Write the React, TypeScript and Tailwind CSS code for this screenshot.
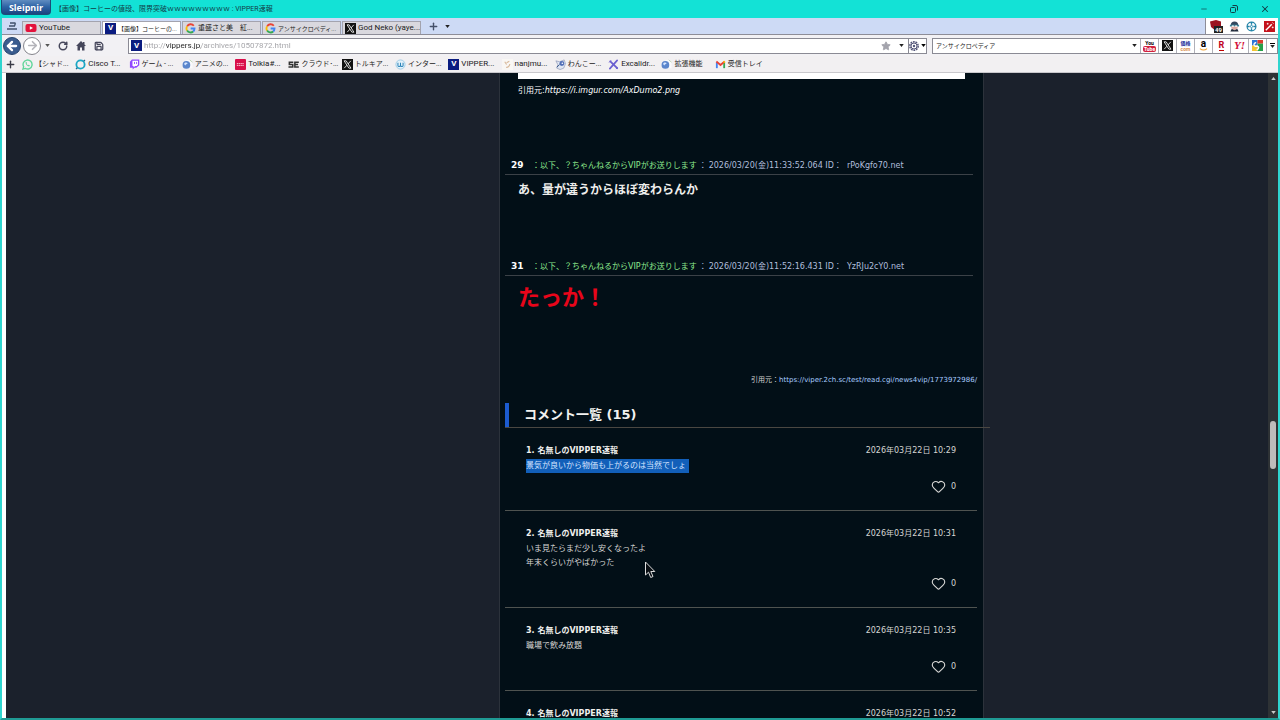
import type { ReactNode } from "react"
import { ArrowLeft, ArrowRight, Heart, Minus, Plus, RotateCw, Save, Star, X } from "lucide-react"

const uiFont = "font-['Roboto','Noto_Sans_CJK_JP',sans-serif]"
const pageFont = "font-['DejaVu_Sans','Noto_Sans_CJK_JP',sans-serif]"

function YouTubeIcon() {
  return (
    <svg viewBox="0 0 12 12" className="size-3 shrink-0">
      <rect x="0.5" y="2" width="11" height="8" rx="2" fill="#e3123c" />
      <path d="M4.8 4.2v3.6L8 6z" fill="#fff" />
    </svg>
  )
}

function VIcon() {
  return (
    <span className="flex size-[11px] shrink-0 items-center justify-center bg-[#0b1c80] text-[8px] font-bold leading-none text-white">
      V
    </span>
  )
}

function GoogleIcon() {
  return (
    <svg viewBox="0 0 12 12" className="size-[11px] shrink-0" fill="none" strokeWidth="2">
      <path d="M9.6 3A4.4 4.4 0 0 0 2.3 3.7" stroke="#ea4335" />
      <path d="M2.3 3.7a4.4 4.4 0 0 0 0 4.6" stroke="#fbbc05" />
      <path d="M2.3 8.3A4.4 4.4 0 0 0 8.9 9.3" stroke="#34a853" />
      <path d="M8.9 9.3A4.4 4.4 0 0 0 10.4 6H6.2" stroke="#4285f4" />
    </svg>
  )
}

function XIcon() {
  return (
    <svg viewBox="0 0 12 12" className="size-[11px] shrink-0">
      <rect width="12" height="12" fill="#111" />
      <path d="M2.3 2h2.2l5.3 8H7.5z" fill="none" stroke="#fff" strokeWidth="0.9" />
      <path d="M9.6 2 6.6 5.4M5.4 6.8 2.4 10" stroke="#fff" strokeWidth="0.9" />
    </svg>
  )
}

function WhatsAppIcon() {
  return (
    <svg viewBox="0 0 12 12" className="size-[11px] shrink-0" fill="none">
      <path d="M1 11l.8-2.6A4.9 4.9 0 1 1 3.7 10.3z" stroke="#5fd59a" strokeWidth="1.5" />
      <path d="M4 3.6c-.6 2 2.2 4.9 4.2 4.4l.3-1.2-1.3-.6-.6.6c-.8-.3-1.3-.9-1.6-1.6l.5-.5-.5-1.3z" fill="#5fd59a" />
    </svg>
  )
}

function RingIcon() {
  return (
    <svg viewBox="0 0 12 12" className="size-[11px] shrink-0" fill="none">
      <circle cx="6" cy="6" r="4.5" stroke="#1aa7c4" strokeWidth="2" />
      <path d="M2.5 9.5 1.2 11M9.5 2.5l1.3-1.3" stroke="#1d6c94" strokeWidth="1.5" />
    </svg>
  )
}

function TwitchIcon() {
  return (
    <svg viewBox="0 0 12 12" className="size-[11px] shrink-0">
      <path d="M3.2.5h8v6.2L8 9.5H6L4 11.5v-2H1V3z" fill="#9147ff" />
      <path d="M3.8 1.8h6v4.2L8.5 7.5H6.8L5 9V7.5H3.8z" fill="#fff" />
      <path d="M6 3.2v2.3M8.3 3.2v2.3" stroke="#9147ff" strokeWidth="1" />
    </svg>
  )
}

function GlobeIcon() {
  return (
    <svg viewBox="0 0 12 12" className="size-[11px] shrink-0">
      <path d="M5 1h5l1.5 2v7H5z" fill="#fafafc" />
      <path d="M8.5 1 11.5 3.5" stroke="#b9d2b0" />
      <circle cx="4.8" cy="6.5" r="4.2" fill="#5b86cc" />
      <path d="M2.2 5.5c1-2 3-2 4-.8-1 1.4-2 .8-2.5 2.3z" fill="#d4e5ff" />
    </svg>
  )
}

function TolkiaIcon() {
  return (
    <svg viewBox="0 0 12 12" className="size-[11px] shrink-0">
      <rect width="12" height="12" rx="1" fill="#d90f4b" />
      <path d="M2 5h8M2 7h8" stroke="#ffd2de" strokeWidth="1" strokeDasharray="1.5 .5" />
    </svg>
  )
}

function ScIcon() {
  return (
    <svg viewBox="0 0 12 12" className="size-[11px] shrink-0" fill="none" stroke="#333" strokeWidth="1.7">
      <path d="M5.8 3.5H1.5v2.6h3.7v2.6H.5" />
      <path d="M11.8 3.5H7.5v5.2h4.3M7.5 6.1h3.5" />
    </svg>
  )
}

function WikiwikiIcon() {
  return (
    <svg viewBox="0 0 12 12" className="size-[11px] shrink-0" fill="none">
      <circle cx="6" cy="6" r="5" fill="#e2f1fa" stroke="#9dcbe6" />
      <path d="M3.2 4v3c0 1.6 2.6 1.6 2.8 0V4v3c.2 1.6 2.8 1.6 2.8 0V4" stroke="#2b83b8" strokeWidth="1.1" />
    </svg>
  )
}

function NanIcon() {
  return (
    <svg viewBox="0 0 12 12" className="size-[11px] shrink-0" fill="none">
      <rect width="12" height="12" fill="#f9f7f4" />
      <path d="M3 3l2 3M5 4l3-1.5M4.5 9c2 .5 4-1.5 4-3.5" stroke="#d8b99b" strokeWidth="1.2" />
    </svg>
  )
}

function DogIcon() {
  return (
    <svg viewBox="0 0 12 12" className="size-[11px] shrink-0" fill="none">
      <path d="M1 2l4 1 5-2 1.5 4-2 5-4 1.5L2 10l1-4z" fill="#dfe5f2" stroke="#7785a8" strokeWidth="0.6" />
      <circle cx="7.5" cy="5" r="2.7" fill="#5270b8" />
      <path d="M2 9l3-3" stroke="#24477f" />
      <circle cx="8" cy="4.6" r=".9" fill="#fff" />
    </svg>
  )
}

function ExcalidrawIcon() {
  return (
    <svg viewBox="0 0 12 12" className="size-[11px] shrink-0" fill="none" stroke="#6a5fd0" strokeLinecap="round">
      <path d="M2.5 2.5l7.5 7.5" strokeWidth="2" />
      <path d="M10 1.5 2 10.5" strokeWidth="1.8" />
      <path d="M1.5 3.5 3 2M9 10.5l1.5-1" strokeWidth="1" />
    </svg>
  )
}

function GmailIcon() {
  return (
    <svg viewBox="0 0 12 12" className="size-[11px] shrink-0" fill="none" strokeWidth="2">
      <path d="M2 10V3.5" stroke="#4285f4" />
      <path d="M10 10V3.5" stroke="#34a853" />
      <path d="M1.5 2.8 6 6.5l4.5-3.7" stroke="#ea4335" />
      <path d="M9.3 3.8l1.4-1.2" stroke="#fbbc05" />
    </svg>
  )
}

function Caret({ className = "" }: { className?: string }) {
  return (
    <svg viewBox="0 0 6 4" className={`h-[3px] w-[5px] shrink-0 ${className}`}>
      <path d="M0 0h6L3 4z" fill="currentColor" />
    </svg>
  )
}

const tabs = [
  { icon: <YouTubeIcon />, title: "YouTube", size: "text-[8px]" },
  { icon: <VIcon />, title: "【画像】コーヒーの...", size: "text-[6px]", active: true },
  { icon: <GoogleIcon />, title: "重盛さと美　紅...", size: "text-[7px]" },
  { icon: <GoogleIcon />, title: "アンサイクロペディ...", size: "text-[6px]" },
  { icon: <XIcon />, title: "God Neko (yaye...", size: "text-[8px]" },
]

const bookmarks = [
  { icon: <WhatsAppIcon />, title: "【シャド..." },
  { icon: <RingIcon />, title: "Cisco T..." },
  { icon: <TwitchIcon />, title: "ゲーム - ..." },
  { icon: <GlobeIcon />, title: "アニメの..." },
  { icon: <TolkiaIcon />, title: "Tolkia#..." },
  { icon: <ScIcon />, title: "クラウド･..." },
  { icon: <XIcon />, title: "トルキア..." },
  { icon: <WikiwikiIcon />, title: "インター..." },
  { icon: <VIcon />, title: "VIPPER..." },
  { icon: <NanIcon />, title: "nanjmu..." },
  { icon: <DogIcon />, title: "わんこー..." },
  { icon: <ExcalidrawIcon />, title: "Excalidr..." },
  { icon: <GlobeIcon />, title: "拡張機能" },
  { icon: <GmailIcon />, title: "受信トレイ" },
]

const searchEngines: { name: string; icon: ReactNode }[] = [
  {
    name: "YouTube",
    icon: (
      <span className="flex flex-col items-center text-[5px] font-bold leading-[6px] text-black">
        You
        <span className="rounded-xs bg-[#d2203c] px-px text-white">Tube</span>
      </span>
    ),
  },
  { name: "X", icon: <XIcon /> },
  {
    name: "価格.com",
    icon: (
      <span className="flex flex-col items-center text-[5px] font-bold leading-[6px] text-[#1c2f9c]">
        価格
        <span className="text-[#d9904f]">com</span>
      </span>
    ),
  },
  {
    name: "Amazon",
    icon: (
      <span className="flex flex-col items-center text-[10px] font-bold leading-[8px] text-black">
        a
        <svg viewBox="0 0 10 3" className="h-[3px] w-[9px]" fill="none">
          <path d="M1 .5c2.5 2 5.5 2 8 0" stroke="#f0a030" strokeWidth="1.2" />
        </svg>
      </span>
    ),
  },
  { name: "楽天", icon: <span className="border-b border-[#bf0000] text-[9px] font-bold leading-[9px] text-[#bf0020]">R</span> },
  {
    name: "Yahoo!",
    icon: <span className="font-['Liberation_Serif',serif] text-[11px] font-bold italic leading-none text-[#d3103a]">Y!</span>,
  },
  {
    name: "Google",
    icon: (
      <svg viewBox="0 0 12 12" className="size-[11px]">
        <rect width="6" height="6" fill="#2f75d6" />
        <rect x="6" width="6" height="4" fill="#dc3a2d" />
        <rect x="6" y="4" width="6" height="8" fill="#25a04a" />
        <rect y="6" width="6" height="6" fill="#f3c332" />
        <path d="M4.5 3a2 2 0 1 0 1 3.5C8 7 8 10 5 10.5" stroke="#fff" strokeWidth="1.5" fill="none" />
      </svg>
    ),
  },
]

const comments = [
  { id: 1, date: "2026年03月22日 10:29", lines: ["景気が良いから物価も上がるのは当然でしょ"], selected: true },
  { id: 2, date: "2026年03月22日 10:31", lines: ["いま見たらまだ少し安くなったよ", "年末くらいがやばかった"] },
  { id: 3, date: "2026年03月22日 10:35", lines: ["職場で飲み放題"] },
  { id: 4, date: "2026年03月22日 10:52", lines: [] },
]

function TitleBar() {
  return (
    <header className="flex h-[18px] shrink-0 items-center bg-[#13e2d6] pl-px text-[#123c46]">
      <button className="mb-[3px] h-[15px] w-[50px] rounded-b-sm border border-t-0 border-[#1c4c78] bg-linear-to-b from-[#5f8cc0] via-[#2c62a4] to-[#1c4480] font-['Open_Sans',sans-serif] text-[9px] font-bold leading-[13px] text-white">
        Sleipnir
      </button>
      <h1 className="ml-1 text-[7px]">【画像】コーヒーの値段、限界突破ｗｗｗｗｗｗｗｗｗ : VIPPER速報</h1>
      <div className="ml-auto flex items-center">
        <button aria-label="最小化" className="flex w-[30px] justify-center">
          <Minus className="size-2" strokeWidth={2} />
        </button>
        <button aria-label="元に戻す" className="flex w-[30px] justify-center">
          <svg viewBox="0 0 8 8" className="size-[8px]" fill="none" stroke="currentColor">
            <rect x=".5" y="2.5" width="5" height="5" rx="1" />
            <path d="M2.5.5H6q1.5 0 1.5 1.5v3.5" />
          </svg>
        </button>
        <button aria-label="閉じる" className="flex w-[31px] justify-center">
          <X className="size-[10px]" strokeWidth={2.5} />
        </button>
      </div>
    </header>
  )
}

function TabBar() {
  return (
    <div className="flex h-[17px] shrink-0 border-b border-[#8d8d98] bg-[#cddaf5]">
      <button aria-label="タブ一覧" className="flex w-5 items-center justify-center text-[#40506c]">
        <svg viewBox="0 0 10 8" className="h-[8px] w-[10px]" fill="none" stroke="currentColor">
          <path d="M3 1h5.5M2 4h6M0 7h10M8.5 1 7.5 4" strokeWidth="1.3" />
        </svg>
      </button>
      <nav className="flex items-end gap-px">
        {tabs.map((tab) => (
          <button
            key={tab.title}
            className={`flex h-[13px] w-[79px] items-center gap-[2px] whitespace-nowrap border border-b-0 border-[#a3a3ae] px-[2px] ${
              tab.active ? "bg-white" : "bg-[#d9d8de]"
            } ${tab.size}`}
          >
            {tab.icon}
            {tab.title}
          </button>
        ))}
      </nav>
      <button aria-label="新しいタブ" className="ml-1 flex w-4 items-center justify-center">
        <Plus className="size-[11px] text-[#44506a]" strokeWidth={3} />
      </button>
      <button aria-label="タブメニュー" className="flex w-3 items-center justify-center">
        <Caret />
      </button>
      <div className="ml-auto flex w-[73px] items-center justify-between border-l border-[#8d8d98] bg-white pl-1 pr-[3px]">
        <button aria-label="ブロック数 49" className="relative">
          <svg viewBox="0 0 12 12" className="size-3">
            <path d="M0 1.5 6 0l5 1.5v5L6 11 1 7z" fill="#9c1420" />
          </svg>
          <span className="absolute left-1 top-[6px] bg-[#222] px-px text-[6px] font-bold leading-[7px] text-white">49</span>
        </button>
        <button aria-label="エージェント">
          <svg viewBox="0 0 12 12" className="size-[11px]">
            <path d="M2 4.5Q2 .5 6 .5t4 4z" fill="#32465c" />
            <path d="M1 4h10v2H1z" fill="#3c8296" />
            <path d="M2.5 6h7v2L6 10 2.5 8z" fill="#dda9a0" />
            <path d="M1.5 11.5 3 8.5l3 1.5 3-1.5 1.5 3z" fill="#222b3c" />
            <circle cx="4.3" cy="5.5" r="1" fill="#fff" />
            <circle cx="7.7" cy="5.5" r="1" fill="#fff" />
          </svg>
        </button>
        <button aria-label="拡張">
          <svg viewBox="0 0 12 12" className="size-[11px]" fill="none" stroke="#2384a8">
            <circle cx="6" cy="6" r="4.8" strokeWidth="1.3" />
            <circle cx="6" cy="6" r="1.2" />
            <path d="M6 1v3M6 8v3M1 6h3M8 6h3" strokeWidth="1.5" />
          </svg>
        </button>
        <button aria-label="ワンド">
          <svg viewBox="0 0 12 12" className="size-[11px]" fill="none" stroke="#fff">
            <rect width="12" height="12" fill="#c4121c" stroke="none" />
            <path d="M2 10 8.5 3.5" strokeWidth="1.6" />
            <path d="M4 2v2M3 3h2M9.5 6v2M8.5 7h2M9 1.5 10.5 3" strokeWidth="0.8" />
          </svg>
        </button>
      </div>
    </div>
  )
}

function NavBar() {
  return (
    <div className="flex h-[21px] shrink-0 items-center bg-[#f2f1f4] pl-px">
      <button aria-label="戻る" className="flex size-[18px] items-center justify-center rounded-full border border-[#27456f] bg-[#3a5c8e] text-white">
        <ArrowLeft className="size-[14px]" strokeWidth={4} />
      </button>
      <button aria-label="進む" className="ml-[2px] flex size-[18px] items-center justify-center rounded-full border border-[#85858c] bg-white text-[#b4b4ba]">
        <ArrowRight className="size-[13px]" strokeWidth={3} />
      </button>
      <button aria-label="履歴" className="flex w-[13px] justify-center text-[#555]">
        <Caret />
      </button>
      <div className="ml-1 flex items-center gap-2 text-[#45465a]">
        <button aria-label="更新">
          <RotateCw className="size-[10px]" strokeWidth={3.5} />
        </button>
        <button aria-label="ホーム">
          <svg viewBox="0 0 10 10" className="size-[10px]" fill="currentColor">
            <path d="M5 0 0 5h1.5v4.5H4V6.5h2v3h2.5V5H10L8.5 3.5V1H7v1z" />
          </svg>
        </button>
        <button aria-label="保存">
          <Save className="size-[10px]" strokeWidth={3} />
        </button>
      </div>
      <div className="ml-6 flex h-4 min-w-0 flex-1 items-center gap-[2px] border border-[#8a8a94] bg-white pl-[2px]">
        <VIcon />
        {/* the host part is drawn darker than the rest of the address */}
        <input
          aria-label="アドレス"
          defaultValue="http://vippers.jp/archives/10507872.html"
          className="min-w-0 flex-1 bg-[linear-gradient(90deg,#a0a0a4_22px,#222_22px,#222_57px,#a0a0a4_57px)] bg-clip-text text-[8px] text-transparent outline-none"
        />
        <button aria-label="お気に入り">
          <Star className="size-[10px] text-[#a3a3ac]" fill="currentColor" />
        </button>
        <button aria-label="アドレス履歴" className="flex w-[13px] justify-center pl-1">
          <Caret />
        </button>
        <button aria-label="設定" className="flex h-full w-[18px] items-center justify-center gap-[2px] border-l border-[#8a8a94]">
          <svg viewBox="0 0 10 10" className="size-[10px]" fill="none" stroke="#55577a">
            <circle cx="5" cy="5" r="4.2" strokeWidth="1.5" strokeDasharray="1.8 .8" />
            <circle cx="5" cy="5" r="3" strokeWidth="1" />
            <circle cx="5" cy="5" r="1.2" fill="#55577a" stroke="none" />
          </svg>
          <Caret className="text-black" />
        </button>
      </div>
      <div className="ml-[5px] flex h-4 items-stretch border border-[#8a8a94] bg-white">
        <input
          aria-label="検索"
          defaultValue="アンサイクロペディア"
          className="w-[196px] bg-transparent pl-[3px] text-[6px] outline-none"
        />
        <button aria-label="検索履歴" className="flex w-[11px] items-center justify-center">
          <Caret />
        </button>
        {searchEngines.map((engine) => (
          <button
            key={engine.name}
            aria-label={engine.name}
            className="flex w-[18px] items-center justify-center border-l border-[#b0b0b8]"
          >
            {engine.icon}
          </button>
        ))}
        <button aria-label="検索メニュー" className="flex w-[11px] flex-col items-center justify-center gap-px border-l border-[#b0b0b8]">
          <span className="h-px w-[5px] bg-black" />
          <Caret />
        </button>
      </div>
    </div>
  )
}

function BookmarkBar() {
  return (
    <nav className="flex h-[17px] shrink-0 items-center border-b border-[#c9c8cc] bg-[#f2f0f2]">
      <button aria-label="ブックマークを追加" className="flex w-5 items-center pl-[3px]">
        <Plus className="size-[11px] text-[#3b3c48]" strokeWidth={3} />
      </button>
      <div className="grid w-[746px] grid-cols-14">
        {bookmarks.map((b) => (
          <a
            key={b.title}
            href="#"
            className={`flex min-w-0 items-center gap-[2px] whitespace-nowrap ${
              /^[\x20-\x7e]+$/.test(b.title) ? "text-[8px]" : "text-[7px]"
            }`}
          >
            {b.icon}
            {b.title}
          </a>
        ))}
      </div>
    </nav>
  )
}

function PostHeader({ no, date, id }: { no: number; date: string; id: string }) {
  return (
    <div className="mr-[5px] flex h-5 items-center whitespace-pre border-b border-[#3b4147] pl-[6px] pt-[3px] text-[8px] text-[#b0bedc]">
      <span className="w-[21px] text-[9px] font-bold text-white">{no}</span>
      <span className="text-[#8eea8e]">：以下、？ちゃんねるからVIPがお送りします</span>
      <span className="px-[2px]">：</span>
      <span>
        {date} ID：  {id}
      </span>
    </div>
  )
}

function Comment({ comment }: { comment: (typeof comments)[number] }) {
  return (
    <li className="mr-px border-b border-[#4f5350] px-[21px] pb-[17px] pt-4 text-[8px] leading-[14px] text-[#d6d6d4]">
      <div className="flex justify-between">
        <span className="font-bold text-[#f0f0ee]">{comment.id}. 名無しのVIPPER速報</span>
        <time>{comment.date}</time>
      </div>
      <div className="pb-[7px] pt-px">
        {comment.lines.map((line) => (
          <p key={line}>
            <span className={comment.selected ? "inline-block bg-[#125fb9] pr-[3px] text-[#d5e4ff]" : ""}>{line}</span>
          </p>
        ))}
      </div>
      <div className="flex h-[13px] items-center justify-end">
        <button aria-label="いいね" className="flex items-center gap-[5px]">
          <Heart className="size-[15px]" strokeWidth={1.8} />
          <span>0</span>
        </button>
      </div>
    </li>
  )
}

function Article() {
  return (
    <main className="border-x border-[#2c323b] bg-[#020f17] px-[5px]">
      <div className="mx-[13px] h-[6px] bg-white" />
      <p className="ml-[13px] mt-[5px] text-[8px] leading-[14px] text-white">
        引用元:<em>https://i.imgur.com/AxDumo2.png</em>
      </p>

      <article className="mt-[57px]">
        <PostHeader no={29} date="2026/03/20(金)11:33:52.064" id="rPoKgfo70.net" />
        <p className="ml-[13px] mt-[5px] text-[12px] font-bold leading-5 text-[#eeeeec]">あ、量が違うからほぼ変わらんか</p>
      </article>
      <article className="mt-14">
        <PostHeader no={31} date="2026/03/20(金)11:52:16.431" id="YzRJu2cY0.net" />
        <p className="ml-[13px] mt-2 text-[22px] font-bold leading-7 text-[#e8051a]">たっか！</p>
      </article>

      <p className="mr-px mt-[61px] text-right text-[7px] leading-[14px] text-[#d0d0ce]">
        引用元：
        <a href="#" className="text-[#a8ccff]">
          https://viper.2ch.sc/test/read.cgi/news4vip/1773972986/
        </a>
      </p>

      <section className="mt-4">
        <h2 className="-mr-[12px] flex h-[25px] items-center border-b border-[#4a4742] text-[13px] font-bold text-[#f2f2f0]">
          <span className="mr-[15px] h-6 w-1 bg-[#1c5bd0]" />
          コメント一覧 (15)
        </h2>
        <ul>
          {comments.map((c) => (
            <Comment key={c.id} comment={c} />
          ))}
        </ul>
      </section>
    </main>
  )
}

function ScrollBar() {
  return (
    <div className="flex w-[10px] shrink-0 flex-col items-center bg-[#2e3235] py-1 text-[#c9c9c9]">
      <Caret className="rotate-180" />
      <div className="mt-[341px] h-12 w-[6px] rounded-full bg-[#bdbbbb]" />
      <Caret className="mt-auto" />
    </div>
  )
}

export default function App() {
  return (
    <div className={`flex h-screen flex-col overflow-hidden bg-[#13e2d6] text-[#222] ${uiFont}`}>
      <TitleBar />
      <div className="flex min-h-0 flex-1 flex-col border-x-2 border-b-2 border-x-[#2fd5cf] border-b-[#1f9a94] bg-white">
        <TabBar />
        <NavBar />
        <BookmarkBar />
        <div className="relative flex min-h-0 flex-1 pl-1">
          <div className={`grid min-w-0 flex-1 grid-cols-[493fr_485px_284fr] overflow-hidden bg-[#1b212c] ${pageFont}`}>
            <div />
            <Article />
          </div>
          <ScrollBar />
          <svg viewBox="0 0 12 18" className="pointer-events-none absolute left-[642px] top-[488px] h-[18px] w-3">
            <path d="M1.5 1v13l3-2.8 2.2 5.3 2.3-1-2.2-5h4z" fill="#0a0f14" stroke="#dcdcdc" strokeWidth="1" />
          </svg>
        </div>
      </div>
    </div>
  )
}
